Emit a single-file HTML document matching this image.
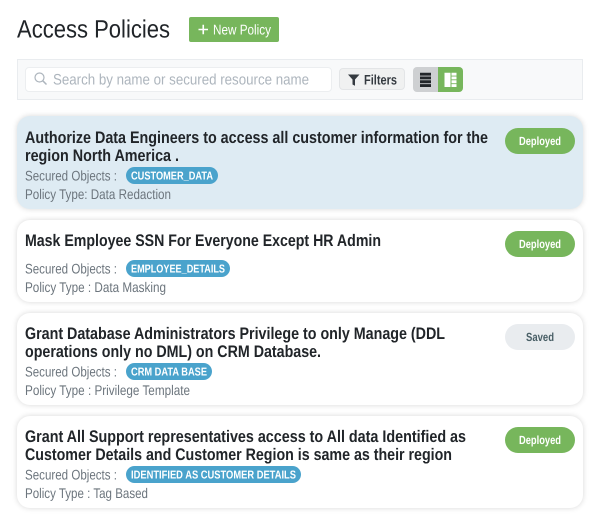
<!DOCTYPE html>
<html><head><meta charset="utf-8"><style>
html,body{margin:0;padding:0;background:#fff;width:600px;height:527px;overflow:hidden}
body{position:relative;font-family:"Liberation Sans",sans-serif}
.b{position:absolute;box-sizing:border-box}
.card{left:17px;width:566px;border-radius:13px;background:#fff;box-shadow:0 0 6px rgba(0,0,0,.16)}
svg{position:absolute;left:0;top:0}
text{font-family:"Liberation Sans",sans-serif;text-rendering:geometricPrecision}
.t{font-size:16.8px;font-weight:700;fill:#212529}
.m{font-size:14px;fill:#6c757d}
.tag{font-size:11.500px;font-weight:700;fill:#fff}
.st{font-size:11.800px;font-weight:700;fill:#fff}
</style></head><body>
<div class="b" style="left:189px;top:17px;width:90px;height:25px;background:#77b65c;border-radius:2px"></div>
<div class="b" style="left:17px;top:59px;width:566px;height:41px;background:#f8f9fa;border:1px solid #e9ecef"></div>
<div class="b" style="left:25px;top:67px;width:307px;height:25px;background:#fff;border:1px solid #eceef0;border-radius:4px"></div>
<div class="b" style="left:339px;top:68px;width:66px;height:22px;background:#f0f1f1;border:1px solid #e3e5e7;border-radius:4px"></div>
<div class="b" style="left:413px;top:67px;width:25px;height:25px;background:#ced0d2;border-radius:4px 0 0 4px"></div>
<div class="b" style="left:438px;top:67px;width:25px;height:25px;background:#77b65c;border-radius:0 4px 4px 0"></div>
<div class="b card" style="top:116px;height:93px;background:#deebf3"></div>
<div class="b card" style="top:220px;height:82px"></div>
<div class="b card" style="top:313px;height:92px"></div>
<div class="b card" style="top:416px;height:92px"></div>
<svg width="600" height="527" viewBox="0 0 600 527">
<text x="17" y="37.500" font-size="25" fill="#212529" textLength="153" lengthAdjust="spacingAndGlyphs">Access Policies</text>
<path d="M198.500 29.500h9.500M203.250 24.800v9.500" stroke="#fff" stroke-width="1.600" fill="none"/>
<text x="213" y="34.500" font-size="14.200" fill="#fff" textLength="58" lengthAdjust="spacingAndGlyphs">New Policy</text>
<circle cx="39.500" cy="77.500" r="4.500" fill="none" stroke="#adb5bd" stroke-width="1.200"/>
<path d="M42.700 80.700l3.800 3.800" stroke="#adb5bd" stroke-width="1.500" fill="none"/>
<text x="53" y="84.300" font-size="15.200" fill="#adb5bd" textLength="256" lengthAdjust="spacingAndGlyphs">Search by name or secured resource name</text>
<path d="M348 74.500h11.500l-4.500 5v6.300l-2.500-1.300v-5z" fill="#343a40"/>
<text x="364" y="84.300" font-size="13.800" font-weight="700" fill="#343a40" textLength="33" lengthAdjust="spacingAndGlyphs">Filters</text>
<path d="M420 72.700h11v2.900h-11zM420 76.500h11v2.900h-11zM420 80.300h11v2.900h-11zM420 84.100h11v2.900h-11z" fill="#212529"/>
<path d="M444.500 72.700h6v14.300h-6zM451.500 72.700h5v2.900h-5zM451.500 76.500h5v2.900h-5zM451.500 80.300h5v2.900h-5zM451.500 84.100h5v2.900h-5z" fill="#fff"/>

<text class="t" x="25" y="143" textLength="463" lengthAdjust="spacingAndGlyphs">Authorize Data Engineers to access all customer information for the</text>
<text class="t" x="25" y="161" textLength="154" lengthAdjust="spacingAndGlyphs">region North America .</text>
<text class="m" x="25" y="180.300" textLength="92" lengthAdjust="spacingAndGlyphs">Secured Objects :</text>
<rect x="126" y="167" width="92" height="17" rx="8.500" fill="#4aa3cc"/>
<text class="tag" x="131" y="179.700" textLength="82" lengthAdjust="spacingAndGlyphs">CUSTOMER_DATA</text>
<text class="m" x="25" y="199" textLength="146" lengthAdjust="spacingAndGlyphs">Policy Type: Data Redaction</text>
<rect x="505" y="128" width="70" height="26" rx="13" fill="#77b65c"/>
<text class="st" x="519" y="145" textLength="42" lengthAdjust="spacingAndGlyphs">Deployed</text>

<text class="t" x="25" y="246" textLength="356" lengthAdjust="spacingAndGlyphs">Mask Employee SSN For Everyone Except HR Admin</text>
<text class="m" x="25" y="273.300" textLength="92" lengthAdjust="spacingAndGlyphs">Secured Objects :</text>
<rect x="126" y="260" width="104" height="17" rx="8.500" fill="#4aa3cc"/>
<text class="tag" x="131" y="272.700" textLength="94" lengthAdjust="spacingAndGlyphs">EMPLOYEE_DETAILS</text>
<text class="m" x="25" y="292" textLength="141" lengthAdjust="spacingAndGlyphs">Policy Type : Data Masking</text>
<rect x="505" y="231" width="70" height="26" rx="13" fill="#77b65c"/>
<text class="st" x="519" y="248" textLength="42" lengthAdjust="spacingAndGlyphs">Deployed</text>

<text class="t" x="25" y="339" textLength="420" lengthAdjust="spacingAndGlyphs">Grant Database Administrators Privilege to only Manage (DDL</text>
<text class="t" x="25" y="357" textLength="296" lengthAdjust="spacingAndGlyphs">operations only no DML) on CRM Database.</text>
<text class="m" x="25" y="376.300" textLength="92" lengthAdjust="spacingAndGlyphs">Secured Objects :</text>
<rect x="126" y="363" width="86" height="17" rx="8.500" fill="#4aa3cc"/>
<text class="tag" x="131" y="375.700" textLength="76" lengthAdjust="spacingAndGlyphs">CRM DATA BASE</text>
<text class="m" x="25" y="395" textLength="165" lengthAdjust="spacingAndGlyphs">Policy Type : Privilege Template</text>
<rect x="505" y="324" width="70" height="26" rx="13" fill="#e9ecef"/>
<text x="526" y="341" font-size="11.800" font-weight="700" fill="#495f66" textLength="28" lengthAdjust="spacingAndGlyphs">Saved</text>

<text class="t" x="25" y="442" textLength="441" lengthAdjust="spacingAndGlyphs">Grant All Support representatives access to All data Identified as</text>
<text class="t" x="25" y="460" textLength="427" lengthAdjust="spacingAndGlyphs">Customer Details and Customer Region is same as their region</text>
<text class="m" x="25" y="479.300" textLength="92" lengthAdjust="spacingAndGlyphs">Secured Objects :</text>
<rect x="126" y="466" width="175" height="17" rx="8.500" fill="#4aa3cc"/>
<text class="tag" x="131" y="478.700" textLength="165" lengthAdjust="spacingAndGlyphs">IDENTIFIED AS CUSTOMER DETAILS</text>
<text class="m" x="25" y="498" textLength="123" lengthAdjust="spacingAndGlyphs">Policy Type : Tag Based</text>
<rect x="505" y="427" width="70" height="26" rx="13" fill="#77b65c"/>
<text class="st" x="519" y="444" textLength="42" lengthAdjust="spacingAndGlyphs">Deployed</text>
</svg>
</body></html>
